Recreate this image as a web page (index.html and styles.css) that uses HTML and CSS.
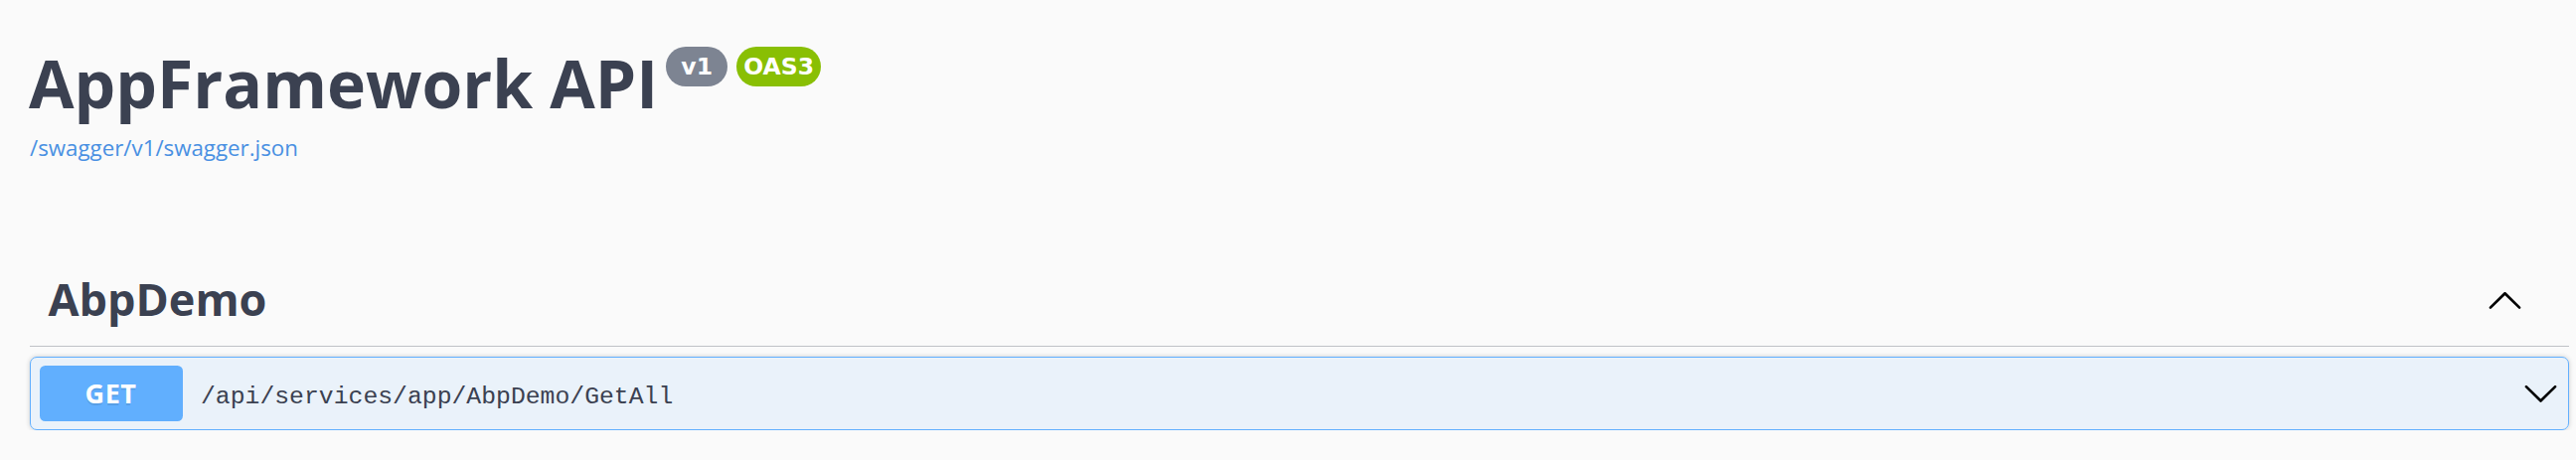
FILE: index.html
```html
<!DOCTYPE html>
<html lang="en">
<head>
<meta charset="utf-8">
<title>AppFramework API</title>
<link rel="stylesheet" href="styles.css">
</head>
<body>
<div class="page">
  <header class="info">
    <div class="title-row">
      <h2 class="title">AppFramework API</h2>
      <span class="badge badge-version"> v1 </span>
      <span class="badge badge-oas">OAS3</span>
    </div>
    <a class="link" href="#">/swagger/v1/swagger.json</a>
  </header>
  <section class="tag-section">
    <h3 class="tag">
      <span class="tag-name">AbpDemo</span>
      <span class="expand">
        <svg class="arrow" viewBox="0 0 20 20" width="37" height="37" aria-hidden="true"><path d="M17.418 14.908c.272.268.709.268.979 0s.271-.701 0-.969l-7.908-7.83c-.27-.268-.707-.268-.979 0l-7.908 7.83c-.27.268-.27.701 0 .969.271.268.709.268.979 0L10 7.767l7.418 7.141z"/></svg>
      </span>
    </h3>
    <div class="opblock">
      <div class="summary">
        <span class="method">GET</span>
        <span class="path">/api/services/app/AbpDemo/GetAll</span>
        <svg class="arrow arrow-down" viewBox="0 0 20 20" width="37" height="37" aria-hidden="true"><path d="M17.418 6.109c.272-.268.709-.268.979 0s.271.701 0 .969l-7.908 7.83c-.27.268-.707.268-.979 0l-7.908-7.83c-.27-.268-.27-.701 0-.969.271-.268.709-.268.979 0L10 13.25l7.418-7.141z"/></svg>
      </div>
    </div>
  </section>
</div>
</body>
</html>
```

FILE: styles.css
```css
html, body {
  margin: 0;
  padding: 0;
  background: #fafafa;
}

body {
  font-family: "Open Sans", "Noto Sans CJK SC", sans-serif;
  color: #3b4151;
}

.page {
  padding: 0 7px 0 30px;
}

.info {
  padding-top: 47px;
}

.title-row {
  display: flex;
  align-items: flex-start;
}

.title {
  margin: 3px 0 0 -1px;
  font-size: 66px;
  line-height: 67px;
  font-weight: 700;
  color: #3b4151;
}

.badge {
  display: block;
  height: 40px;
  line-height: 40px;
  padding: 0 7px;
  border-radius: 20px;
  font-family: "DejaVu Sans", sans-serif;
  font-weight: 700;
  font-size: 23.5px;
  white-space: pre;
  color: #fff;
}

.badge-version {
  margin-left: 8px;
  background: #7d8492;
}

.badge-oas {
  margin-left: 9px;
  background: #89bf04;
}

.link {
  display: block;
  margin-top: 16px;
  font-size: 22.3px;
  color: #4990e2;
  text-decoration: none;
}

.tag {
  display: flex;
  align-items: center;
  margin: 96px 0 0;
  padding: 18px 46px 24px 18.5px;
  border-bottom: 1px solid rgba(59, 65, 81, 0.3);
  font-size: 45px;
  line-height: 46px;
  font-weight: 700;
  color: #3b4151;
}

.tag-name {
  flex: 1;
}

.expand {
  display: flex;
}

.arrow {
  display: block;
  fill: #000;
}

.opblock {
  margin-top: 9.5px;
  border: 1px solid #61affe;
  border-radius: 7px;
  background: rgba(97, 175, 254, 0.1);
  box-shadow: 0 0 5px rgba(0, 0, 0, 0.19);
}

.summary {
  display: flex;
  align-items: baseline;
  padding: 8.5px 9px 8.5px 8.5px;
}

.method {
  width: 144px;
  height: 55.5px;
  line-height: 55.5px;
  border-radius: 5.5px;
  background: #61affe;
  color: #fff;
  font-size: 27px;
  font-weight: 700;
  letter-spacing: 0.5px;
  text-align: center;
  text-shadow: 0 2px 0 rgba(0, 0, 0, 0.1);
}

.path {
  margin-left: 18.5px;
  font-family: "Liberation Mono", monospace;
  font-size: 24.75px;
  color: #3b4151;
}

.arrow-down {
  margin-left: auto;
  align-self: center;
}
```
